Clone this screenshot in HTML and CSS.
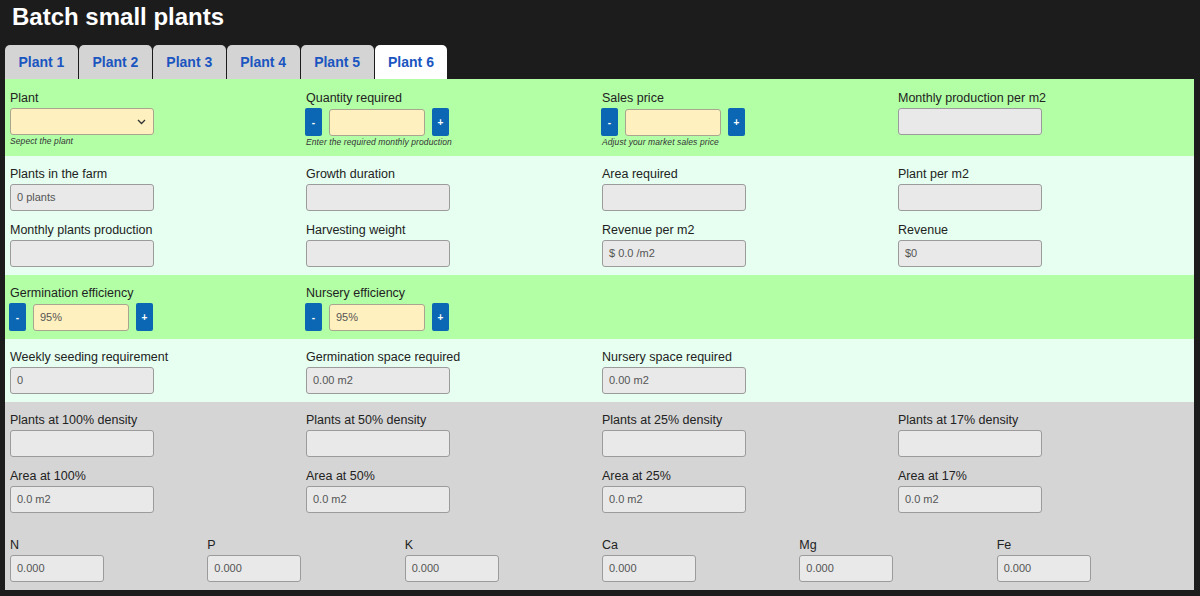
FILE: index.html
```html
<!DOCTYPE html>
<html>
<head>
<meta charset="UTF-8">
<title>Batch small plants</title>
<link rel="stylesheet" href="styles.css">
</head>
<body>
<h1 class="title">Batch small plants</h1>
<div class="tabs">
	<div class="tab">Plant 1</div>
	<div class="tab">Plant 2</div>
	<div class="tab">Plant 3</div>
	<div class="tab">Plant 4</div>
	<div class="tab">Plant 5</div>
	<div class="tab tab-active">Plant 6</div>
</div>
<div class="panel">
	<!-- inputs -->
	<div class="section section-green section-first grid4">
		<div class="field">
			<label>Plant</label>
			<div class="select">
				<svg width="9" height="6" viewBox="0 0 9 6"><path d="M1 1 L4.5 4.5 L8 1" stroke="#333" stroke-width="1.3" fill="none"/></svg>
			</div>
			<p class="help">Sepect the plant</p>
		</div>
		<div class="field">
			<label>Quantity required</label>
			<div class="stepper">
				<button class="btn">-</button>
				<div class="input input-edit"></div>
				<button class="btn">+</button>
			</div>
			<p class="help">Enter the required monthly production</p>
		</div>
		<div class="field">
			<label>Sales price</label>
			<div class="stepper">
				<button class="btn">-</button>
				<div class="input input-edit"></div>
				<button class="btn">+</button>
			</div>
			<p class="help">Adjust your market sales price</p>
		</div>
		<div class="field">
			<label>Monthly production per m2</label>
			<div class="input"></div>
		</div>
	</div>

	<div class="section section-mint grid4">
		<div class="field"><label>Plants in the farm</label><div class="input">0 plants</div></div>
		<div class="field"><label>Growth duration</label><div class="input"></div></div>
		<div class="field"><label>Area required</label><div class="input"></div></div>
		<div class="field"><label>Plant per m2</label><div class="input"></div></div>
		<div class="field"><label>Monthly plants production</label><div class="input"></div></div>
		<div class="field"><label>Harvesting weight</label><div class="input"></div></div>
		<div class="field"><label>Revenue per m2</label><div class="input">$ 0.0 /m2</div></div>
		<div class="field"><label>Revenue</label><div class="input">$0</div></div>
	</div>

	<div class="section section-green grid4">
		<div class="field">
			<label>Germination efficiency</label>
			<div class="stepper">
				<button class="btn">-</button>
				<div class="input input-edit">95%</div>
				<button class="btn">+</button>
			</div>
		</div>
		<div class="field">
			<label>Nursery efficiency</label>
			<div class="stepper">
				<button class="btn">-</button>
				<div class="input input-edit">95%</div>
				<button class="btn">+</button>
			</div>
		</div>
	</div>

	<div class="section section-mint grid4">
		<div class="field"><label>Weekly seeding requirement</label><div class="input">0</div></div>
		<div class="field"><label>Germination space required</label><div class="input">0.00 m2</div></div>
		<div class="field"><label>Nursery space required</label><div class="input">0.00 m2</div></div>
	</div>

	<div class="section section-gray">
		<div class="grid4">
			<div class="field"><label>Plants at 100% density</label><div class="input"></div></div>
			<div class="field"><label>Plants at 50% density</label><div class="input"></div></div>
			<div class="field"><label>Plants at 25% density</label><div class="input"></div></div>
			<div class="field"><label>Plants at 17% density</label><div class="input"></div></div>
			<div class="field"><label>Area at 100%</label><div class="input">0.0 m2</div></div>
			<div class="field"><label>Area at 50%</label><div class="input">0.0 m2</div></div>
			<div class="field"><label>Area at 25%</label><div class="input">0.0 m2</div></div>
			<div class="field"><label>Area at 17%</label><div class="input">0.0 m2</div></div>
		</div>
		<div class="grid6">
			<div class="field"><label>N</label><div class="input input-small">0.000</div></div>
			<div class="field"><label>P</label><div class="input input-small">0.000</div></div>
			<div class="field"><label>K</label><div class="input input-small">0.000</div></div>
			<div class="field"><label>Ca</label><div class="input input-small">0.000</div></div>
			<div class="field"><label>Mg</label><div class="input input-small">0.000</div></div>
			<div class="field"><label>Fe</label><div class="input input-small">0.000</div></div>
		</div>
	</div>
</div>
</body>
</html>
```

FILE: styles.css
```css
*{
	box-sizing: border-box;
}
body {
	margin: 0;
	padding: 0 6px 0 5px;
	background: #1c1c1c;
	font-family: "Liberation Sans", Arial, sans-serif;
	color: #222;
}
.title {
	margin: 0;
	padding: 3px 0 0 7px;
	font-size: 24px;
	line-height: 28px;
	font-weight: bold;
	color: #fff;
}
.tabs {
	display: flex;
	gap: 1px;
	margin-top: 14px;
}
.tab {
	height: 34px;
	line-height: 34px;
	padding: 0 13.5px;
	background: #d4d4d4;
	border-radius: 5px 5px 0 0;
	font-size: 14px;
	font-weight: bold;
	color: #1a55c0;
}
.tab-active {
	background: #fff;
}
.panel {
	width: 100%;
}
.section {
	padding: 8px 0 8px 5px;
}
.section-first {
	padding: 9px 0 9px 5px;
}
.section-green {
	background: #b2ffa6;
}
.section-mint {
	background: #e6fff1;
}
.section-gray {
	background: #d5d5d5;
}
.grid4 {
	display: grid;
	grid-template-columns: repeat(4, 1fr);
	row-gap: 9px;
}
.grid6 {
	display: grid;
	grid-template-columns: repeat(6, 1fr);
	margin-top: 22px;
}
.field label {
	display: block;
	font-size: 12.5px;
	line-height: 16px;
	padding-top: 2px;
	margin-bottom: 2px;
	color: #222;
}
.input {
	width: 144px;
	height: 27px;
	padding: 0 6px;
	border: 1px solid #9b9b9b;
	border-radius: 3px;
	background: #e9e9e9;
	font-size: 11px;
	line-height: 25px;
	color: #555;
}
.input-small {
	width: 94px;
}
.input-edit {
	background: #fff0bf;
	border-color: #a9a58f;
}
.select {
	display: flex;
	align-items: center;
	justify-content: flex-end;
	width: 144px;
	height: 27px;
	padding-right: 7px;
	border: 1px solid #a9a58f;
	border-radius: 3px;
	background: #fff0bf;
}
.stepper {
	display: flex;
	align-items: center;
	justify-content: space-between;
	width: 144px;
	margin-left: -1px;
	height: 28px;
}
.stepper .input {
	width: 96px;
}
.btn {
	width: 17px;
	height: 28px;
	padding: 0;
	border: none;
	border-radius: 2px;
	background: #0b67b3;
	color: #fff;
	font-family: "Liberation Sans", Arial, sans-serif;
	font-size: 10px;
	font-weight: bold;
}
.help {
	margin: 1px 0 0;
	font-size: 8.5px;
	line-height: 10px;
	font-style: italic;
	color: #333;
	letter-spacing: 0.1px;
}
```
